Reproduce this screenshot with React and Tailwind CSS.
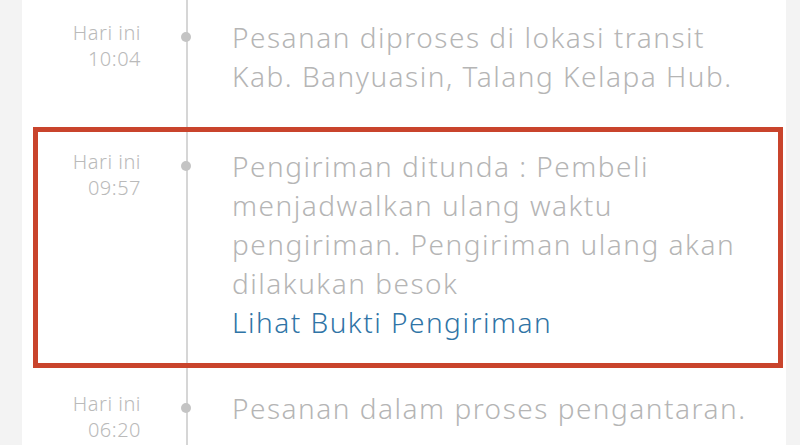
import React from 'react';

const entries = [
  {
    day: 'Hari ini',
    time: '10:04',
    text: 'Pesanan diproses di lokasi transit Kab. Banyuasin, Talang Kelapa Hub.',
  },
  {
    day: 'Hari ini',
    time: '09:57',
    text: 'Pengiriman ditunda : Pembeli menjadwalkan ulang waktu pengiriman. Pengiriman ulang akan dilakukan besok',
    link: 'Lihat Bukti Pengiriman',
  },
  {
    day: 'Hari ini',
    time: '06:20',
    text: 'Pesanan dalam proses pengantaran.',
  },
];

const Row = ({ entry }) => (
  <div className="flex">
    <div className="w-[119px] shrink-0 pt-[2px] text-right text-[20px] font-light leading-[26px] tracking-[0.5px] text-[#bababa]">
      <div>{entry.day}</div>
      <div>{entry.time}</div>
    </div>
    <div className="w-[91px] shrink-0">
      <div className="ml-[40px] mt-[14px] h-[10px] w-[10px] rounded-full bg-[#c4c4c4]" />
    </div>
    <div className="w-[532px] text-[28px] font-light leading-[39px] tracking-[1.5px] text-[#b5b5b5]">
      <p>{entry.text}</p>
      {entry.link && <p className="text-[#2f74a6]">{entry.link}</p>}
    </div>
  </div>
);

const App = () => {
  return (
    <div className="flex h-[445px] w-[800px] overflow-hidden bg-[#f3f3f3]" style={{ fontFamily: '"Noto Sans", sans-serif' }}>
      <div className="relative ml-[22px] h-full w-[764px] bg-white pt-[18px]">
        {/* timeline rail */}
        <div className="absolute bottom-0 left-[164px] top-0 w-[2px] bg-[#d6d6d6]" />

        <div className="relative">
          <Row entry={entries[0]} />
        </div>

        <div className="relative z-10 ml-[11px] mr-[3px] mt-[31px] border-[5px] border-[#c9442c] pb-[21px] pt-[15px]">
          <div className="-ml-[16px]">
            <Row entry={entries[1]} />
          </div>
        </div>

        <div className="relative mt-[21px]">
          <Row entry={entries[2]} />
        </div>
      </div>
    </div>
  );
};

export default App;
